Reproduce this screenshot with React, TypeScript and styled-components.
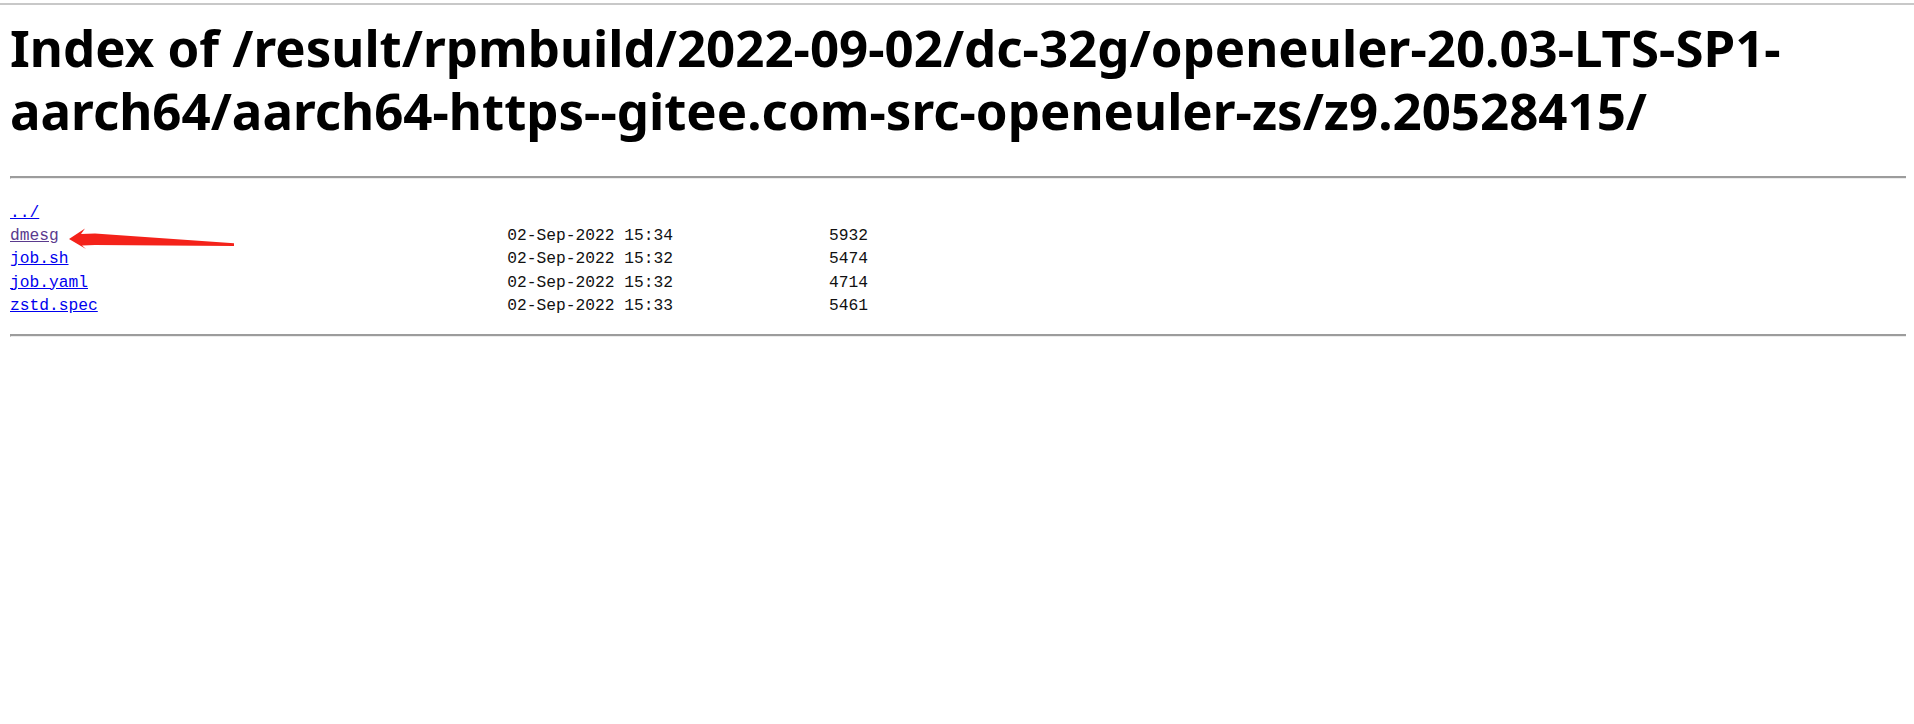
import styled, { createGlobalStyle } from 'styled-components';

const GlobalStyle = createGlobalStyle`
  html, body {
    margin: 0;
    padding: 0;
    background: #fff;
  }
  #root {
    min-height: 724px;
  }
`;

interface IEntry {
  name: string;
  date: string;
  size: string;
  visited?: boolean;
}

const entries: IEntry[] = [
  { name: 'dmesg', date: '02-Sep-2022 15:34', size: '5932', visited: true },
  { name: 'job.sh', date: '02-Sep-2022 15:32', size: '5474' },
  { name: 'job.yaml', date: '02-Sep-2022 15:32', size: '4714' },
  { name: 'zstd.spec', date: '02-Sep-2022 15:33', size: '5461' }
];

const Page = styled.div`
  position: relative;
  min-height: 724px;
`;

const TopRule = styled.div`
  height: 2px;
  margin-top: 3px;
  background: #c8c8c8;
`;

const Content = styled.div`
  padding: 0 8px 0 10px;
`;

const Title = styled.h1`
  margin: 11px 0 0 0;
  font-family: 'Noto Sans', 'Open Sans', sans-serif;
  font-weight: 700;
  font-size: 51px;
  line-height: 63px;
  color: #000;
  word-break: normal;
`;

const Rule = styled.hr<{ $gap: number }>`
  margin: ${({ $gap }) => $gap}px 0 0 0;
  height: 0;
  border: 0;
  border-top: 2px solid #9c9c9c;
  border-left: 1px solid #9c9c9c;
  border-bottom: 1px solid #ececec;
`;

const Listing = styled.div`
  margin-top: 22px;
  font-family: 'Liberation Mono', monospace;
  font-size: 16.25px;
  line-height: 23.2px;
  color: #111;
`;

const Row = styled.div`
  display: grid;
  grid-template-columns: 51ch 17ch 20ch;
  white-space: pre;
`;

const NameLink = styled.a<{ $visited?: boolean }>`
  color: ${({ $visited }) => ($visited ? '#5a3a8e' : '#0000ee')};
  text-decoration: underline;
  justify-self: start;
`;

const DateCell = styled.span``;

const SizeCell = styled.span`
  text-align: right;
`;

const Arrow = styled.svg`
  position: absolute;
  left: 0;
  top: 0;
  pointer-events: none;
`;

function PointerArrow() {
  return (
    <Arrow width="260" height="260" viewBox="0 0 260 260">
      <polygon
        points="69,236 85,225.5 81,231 95,230.5 234,240.3 234,243 95,242 82,242.5 86,246"
        fill="#f4221a"
      />
    </Arrow>
  );
}

export default function App() {
  return (
    <Page>
      <GlobalStyle />
      <TopRule />
      <Content>
        <Title>Index of /result/rpmbuild/2022-09-02/dc-32g/openeuler-20.03-LTS-SP1-aarch64/aarch64-https--gitee.com-src-openeuler-zs/z9.20528415/</Title>
        <Rule $gap={34} />
        <Listing>
          <Row>
            <NameLink href="#">../</NameLink>
          </Row>
          {entries.map((e) => (
            <Row key={e.name}>
              <NameLink href="#" $visited={e.visited}>{e.name}</NameLink>
              <DateCell>{e.date}</DateCell>
              <SizeCell>{e.size}</SizeCell>
            </Row>
          ))}
        </Listing>
        <Rule $gap={17} />
      </Content>
      <PointerArrow />
    </Page>
  );
}
